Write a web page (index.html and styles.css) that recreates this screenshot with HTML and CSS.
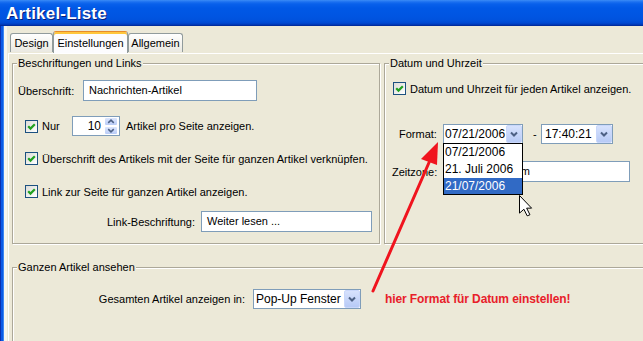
FILE: index.html
```html
<!DOCTYPE html>
<html lang="de">
<head>
<meta charset="utf-8">
<title>Artikel-Liste</title>
<link rel="stylesheet" href="styles.css">
</head>
<body>
<div class="window">
  <div class="titlebar"><span class="title">Artikel-Liste</span></div>
  <div class="client">
    <div class="tabs">
      <div class="tab tab-design">Design</div>
      <div class="tab tab-active">Einstellungen</div>
      <div class="tab tab-allg">Allgemein</div>
    </div>
    <div class="panel">
      <div class="top-row">
        <fieldset class="group group-left">
          <legend>Beschriftungen und Links</legend>
          <div class="body-left">
            <div class="row row-heading">
              <span class="lbl-heading">Überschrift:</span>
              <div class="textbox tb-heading">Nachrichten-Artikel</div>
            </div>
            <div class="row row-nur">
              <span class="check"><svg width="11" height="11" viewBox="0 0 11 11"><path d="M2.2 5.2 L4.5 7.6 L8.8 3.2" fill="none" stroke="#21A121" stroke-width="2.2"/></svg></span>
              <span class="lbl-nur">Nur</span>
              <div class="spin">
                <span class="spin-val">10</span>
                <span class="spin-btns">
                  <span class="spin-btn"><svg width="13" height="7" viewBox="0 0 13 7"><path d="M3.5 5 L6.5 2 L9.5 5" fill="none" stroke="#4D6185" stroke-width="1.6"/></svg></span>
                  <span class="spin-btn"><svg width="13" height="7" viewBox="0 0 13 7"><path d="M3.5 2 L6.5 5 L9.5 2" fill="none" stroke="#4D6185" stroke-width="1.6"/></svg></span>
                </span>
              </div>
              <span class="after-spin">Artikel pro Seite anzeigen.</span>
            </div>
            <div class="row row-check r3">
              <span class="check"><svg width="11" height="11" viewBox="0 0 11 11"><path d="M2.2 5.2 L4.5 7.6 L8.8 3.2" fill="none" stroke="#21A121" stroke-width="2.2"/></svg></span>
              <span class="check-text">Überschrift des Artikels mit der Seite für ganzen Artikel verknüpfen.</span>
            </div>
            <div class="row row-check r4">
              <span class="check"><svg width="11" height="11" viewBox="0 0 11 11"><path d="M2.2 5.2 L4.5 7.6 L8.8 3.2" fill="none" stroke="#21A121" stroke-width="2.2"/></svg></span>
              <span class="check-text">Link zur Seite für ganzen Artikel anzeigen.</span>
            </div>
            <div class="row row-link">
              <span class="lbl-link">Link-Beschriftung:</span>
              <div class="textbox tb-link">Weiter lesen ...</div>
            </div>
          </div>
        </fieldset>
        <fieldset class="group group-right">
          <legend>Datum und Uhrzeit</legend>
          <div class="body-right">
            <div class="row row-check rr1">
              <span class="check"><svg width="11" height="11" viewBox="0 0 11 11"><path d="M2.2 5.2 L4.5 7.6 L8.8 3.2" fill="none" stroke="#21A121" stroke-width="2.2"/></svg></span>
              <span class="check-text">Datum und Uhrzeit für jeden Artikel anzeigen.</span>
            </div>
            <div class="row row-format">
              <span class="lbl-format">Format:</span>
              <div class="combo combo-date">
                <span class="combo-val">07/21/2006</span>
                <span class="combo-btn"><svg width="14" height="16" viewBox="0 0 14 16"><path d="M4 6.5 L7 9.5 L10 6.5" fill="none" stroke="#4D6185" stroke-width="2"/></svg></span>
                <div class="droplist">
                  <div class="drop-item">07/21/2006</div>
                  <div class="drop-item">21. Juli 2006</div>
                  <div class="drop-item drop-sel">21/07/2006</div>
                </div>
              </div>
              <span class="dash">-</span>
              <div class="combo combo-time">
                <span class="combo-val">17:40:21</span>
                <span class="combo-btn"><svg width="14" height="16" viewBox="0 0 14 16"><path d="M4 6.5 L7 9.5 L10 6.5" fill="none" stroke="#4D6185" stroke-width="2"/></svg></span>
              </div>
            </div>
            <div class="row row-zone">
              <span class="lbl-zone">Zeitzone:</span>
              <div class="textbox tb-zone">MEZ Amsterdam</div>
            </div>
          </div>
        </fieldset>
      </div>
      <fieldset class="group group-bottom">
        <legend>Ganzen Artikel ansehen</legend>
        <div class="body-bottom">
          <div class="row row-full">
            <span class="lbl-full">Gesamten Artikel anzeigen in:</span>
            <div class="combo combo-popup">
              <span class="combo-val">Pop-Up Fenster</span>
              <span class="combo-btn"><svg width="14" height="16" viewBox="0 0 14 16"><path d="M4 6.5 L7 9.5 L10 6.5" fill="none" stroke="#4D6185" stroke-width="2"/></svg></span>
            </div>
            <span class="note">hier Format für Datum einstellen!</span>
          </div>
        </div>
      </fieldset>
    </div>
  </div>
  <svg class="overlay" width="643" height="341" viewBox="0 0 643 341">
    <line x1="373" y1="291" x2="431" y2="158" stroke="#F0141E" stroke-width="3" stroke-linecap="round"/>
    <polygon points="438,142 437,165 421,159" fill="#F0141E"/>
    <g transform="translate(519.5 195.5) scale(1.1)">
      <polygon points="0,0 0,16 4,12.5 7,18.5 9.5,17.5 6.5,11.5 11,11.5" fill="#fff" stroke="#000" stroke-width="0.9" stroke-linejoin="miter"/>
    </g>
  </svg>
</div>
</body>
</html>
```

FILE: styles.css
```css
* { box-sizing: border-box; }

body {
  margin: 0;
  width: 643px;
  height: 341px;
  overflow: hidden;
  background: #ECE9D8;
  font-family: "Liberation Sans", Arial, sans-serif;
  font-size: 11px;
  color: #000;
}

.window {
  position: relative;
  width: 643px;
  height: 341px;
  display: flex;
  flex-direction: column;
  overflow: hidden;
}

.titlebar {
  flex: none;
  height: 26px;
  display: flex;
  align-items: center;
  padding: 1px 0 0 6px;
  background: linear-gradient(to bottom,
    #3B8CF6 0px, #1A6FF0 2px, #0860EB 4px, #0058E6 8px,
    #0055E2 16px, #0052DD 20px, #0049D2 23px, #0035B0 25px, #00238C 26px);
}

.title {
  color: #fff;
  font-weight: bold;
  font-size: 17px;
  letter-spacing: 0.2px;
  text-shadow: 1px 1px 0 #0A1E7A;
}

.client {
  flex: 1;
  padding: 5px 0 0 4px;
  background: linear-gradient(to right,
    #0A2FB0 0 1px, #0B5AE6 1px 3px, #3C86F0 3px 4px,
    #F6F5EF 4px 7px, #ECE9D8 7px);
}

.tabs {
  display: flex;
  align-items: flex-end;
  height: 22px;
  margin-left: 6px;
  position: relative;
  z-index: 2;
}

.tab {
  height: 19px;
  border: 1px solid #919B9C;
  border-bottom: none;
  border-radius: 3px 3px 0 0;
  background: linear-gradient(to bottom, #FFFFFF, #F3F2EC 60%, #E9E8E1);
  text-align: center;
  line-height: 18px;
  margin-bottom: 1px;
}

.tab-design { width: 43px; }
.tab-active {
  width: 75px;
  height: 22px;
  margin-bottom: 0;
  background: #FCFCFE;
  border-top: 1px solid #E68B2C;
  box-shadow: inset 0 2px 0 #FFC73C;
  line-height: 22px;
}
.tab-allg { width: 55px; }

.panel {
  margin-left: 4px;
  border-top: 1px solid #fff;
  border-left: 1px solid #fff;
  padding: 3px 0 0 3px;
  height: 400px;
}

.top-row {
  display: flex;
  width: 700px;
}

.group {
  margin: 0;
  padding: 0;
  min-width: 0;
  border: 1px solid #ACA899;
  box-shadow: inset 1px 1px 0 #fff, 1px 1px 0 #fff;
}

.group legend {
  margin-left: 4px;
  padding: 0 1px;
  line-height: 13px;
  font-size: 11px;
  background: #ECE9D8;
}

.group-left { width: 368px; height: 187px; flex: none; }
.group-right { width: 300px; height: 187px; flex: none; margin-left: 4px; }
.group-bottom { width: 700px; height: 120px; margin-top: 17px; }

.row {
  display: flex;
  align-items: center;
}

.body-left { padding: 10px 0 0 5px; }

.textbox {
  height: 21px;
  border: 1px solid #7F9DB9;
  background: #fff;
  padding-left: 5px;
  line-height: 19px;
  white-space: nowrap;
  overflow: hidden;
}

.lbl-heading { width: 65px; }
.tb-heading { width: 174px; }

.check {
  flex: none;
  width: 13px;
  height: 13px;
  border: 1px solid #1C5180;
  background: linear-gradient(135deg, #DCDCD7, #FFFFFF);
  display: flex;
  align-items: center;
  justify-content: center;
}
.check svg { display: block; }

.row-nur { margin-top: 15px; height: 20px; }
.row-nur .check { margin-left: 7px; }
.lbl-nur { margin-left: 4px; width: 30px; }

.spin {
  width: 48px;
  height: 20px;
  border: 1px solid #7F9DB9;
  background: #fff;
  display: flex;
}
.spin-val {
  flex: 1;
  text-align: right;
  padding-right: 3px;
  line-height: 18px;
  font-size: 12px;
}
.spin-btns {
  width: 15px;
  display: flex;
  flex-direction: column;
  padding: 0 1px 0 0;
}
.spin-btn {
  flex: 1;
  display: flex;
  align-items: center;
  justify-content: center;
  background: linear-gradient(to bottom, #DCE6FD, #B9CCF7);
  border: 1px solid #fff;
  border-radius: 2px;
}
.after-spin { margin-left: 6px; }

.row-check { height: 17px; }
.row-check .check { margin-left: 7px; }
.check-text { margin-left: 4px; white-space: nowrap; }
.r3 { margin-top: 14px; }
.r4 { margin-top: 16px; }

.row-link { margin-top: 11px; }
.lbl-link { width: 177px; text-align: right; margin-right: 6px; }
.tb-link { width: 171px; }

.body-right { padding: 10px 0 0 0; }
.rr1 .check { margin-left: 8px; }

.row-format { margin-top: 27px; padding-left: 14px; }
.lbl-format { width: 44px; }

.combo {
  position: relative;
  height: 20px;
  border: 1px solid #7F9DB9;
  background: #fff;
  display: flex;
  align-items: center;
}
.combo-val {
  flex: 1;
  padding-left: 1px;
  white-space: nowrap;
  font-size: 12px;
}
.combo-btn {
  width: 16px;
  height: 18px;
  display: flex;
  align-items: center;
  justify-content: center;
  background: linear-gradient(to bottom, #D7E2FD, #B7CAF6);
  border: 1px solid #C9D7FB;
  border-radius: 2px;
}
.combo-date { width: 80px; }
.combo-time { width: 72px; }
.combo-time .combo-val { padding-left: 3px; }

.droplist {
  position: absolute;
  left: -1px;
  top: 18px;
  width: 80px;
  height: 52px;
  border: 1px solid #000;
  background: #fff;
  z-index: 3;
}
.drop-item {
  height: 17px;
  line-height: 17px;
  padding-left: 1px;
  font-size: 12px;
}
.drop-sel {
  background: #316AC5;
  color: #fff;
  height: 16px;
  line-height: 16px;
}

.dash { margin-left: 10px; width: 8px; }

.row-zone { margin-top: 17px; padding-left: 7px; }
.lbl-zone { width: 51px; }
.tb-zone { width: 187px; padding-left: 4px; }

.body-bottom { padding: 15px 0 0 0; }
.lbl-full { width: 232px; text-align: right; margin-right: 8px; }
.combo-popup { width: 108px; }
.combo-popup .combo-val { padding-left: 2px; }

.note {
  margin-left: 24px;
  color: #E8202A;
  font-weight: bold;
  font-size: 12px;
  letter-spacing: -0.1px;
  white-space: nowrap;
}

.overlay {
  position: absolute;
  left: 0;
  top: 0;
  pointer-events: none;
  z-index: 10;
}
```
